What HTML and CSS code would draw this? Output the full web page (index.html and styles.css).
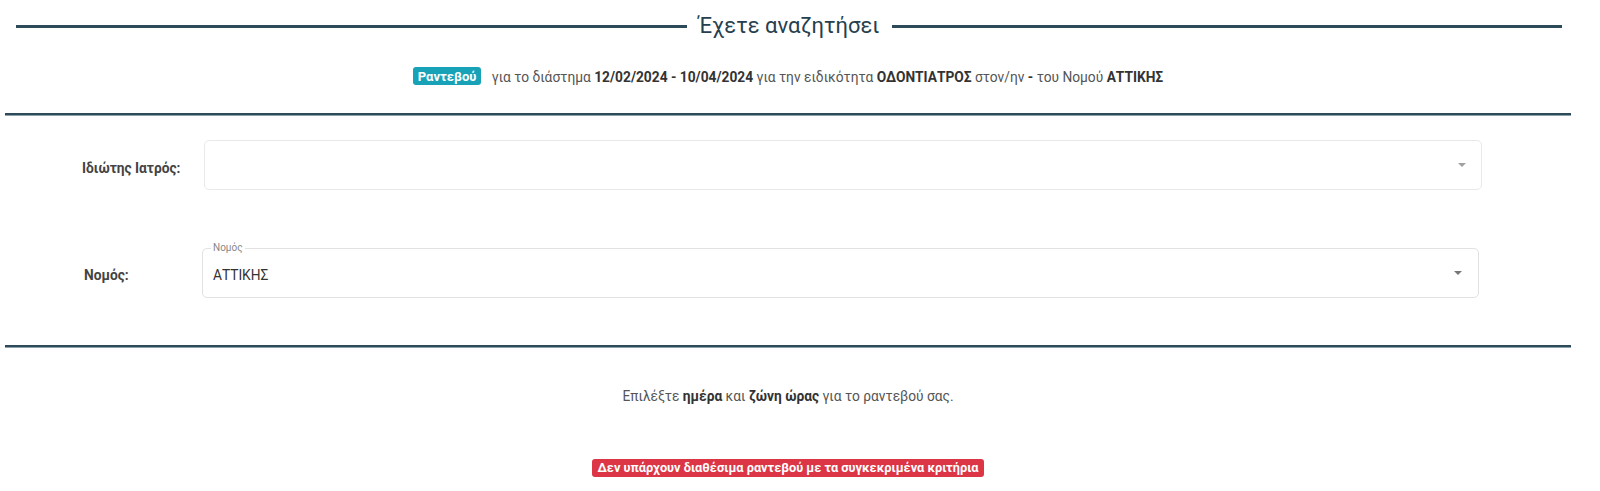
FILE: index.html
```html
<!DOCTYPE html>
<html lang="el">
<head>
  <meta charset="UTF-8" />
  <title>Αναζήτηση ραντεβού</title>
  <link rel="stylesheet" href="styles.css">
</head>
<body>
  <div class="page">
    <div class="title-row">
      <span class="title-line"></span>
      <h2>Έχετε αναζητήσει</h2>
      <span class="title-line"></span>
    </div>

    <p class="summary">
      <span class="badge badge-info">Ραντεβού</span>
      για το διάστημα <b>12/02/2024 - 10/04/2024</b> για την ειδικότητα <b>ΟΔΟΝΤΙΑΤΡΟΣ</b> στον/ην <b>-</b> του Νομού <b>ΑΤΤΙΚΗΣ</b>
    </p>

    <hr class="divider">

    <div class="form-row">
      <label class="form-label">Ιδιώτης Ιατρός:</label>
      <div class="select-box">
        <span class="caret"></span>
      </div>
    </div>

    <div class="form-row form-row-outlined">
      <label class="form-label">Νομός:</label>
      <div class="select-box outlined">
        <span class="float-label">Νομός</span>
        <span class="select-value">ΑΤΤΙΚΗΣ</span>
        <span class="caret dark"></span>
      </div>
    </div>

    <hr class="divider divider-low">

    <p class="hint">Επιλέξτε <b>ημέρα</b> και <b>ζώνη ώρας</b> για το ραντεβού σας.</p>

    <div class="no-results">
      <span class="badge badge-danger">Δεν υπάρχουν διαθέσιμα ραντεβού με τα συγκεκριμένα κριτήρια</span>
    </div>
  </div>
</body>
</html>
```

FILE: styles.css
```css
body {
  margin: 0;
  font-family: Roboto, 'Noto Sans', sans-serif;
  font-size: 13.75px;
  color: #555;
  background: #fff;
}
.page {
  margin: 0 29px 0 5px;
}
b {
  color: #333;
  font-weight: bold;
}

/* heading with lines */
.title-row {
  display: flex;
  align-items: center;
  gap: 12px;
  margin: 12px 9px 0 11px;
}
.title-line {
  flex: 1;
  height: 3px;
  background: #2c4a58;
}
.title-row h2 {
  margin: 0;
  font-size: 22px;
  line-height: 28px;
  font-weight: normal;
  color: #26404e;
}

.summary {
  margin: 27px 0 0;
  line-height: 20px;
  text-align: center;
}
.badge {
  display: inline-block;
  font-size: 13px;
  font-weight: bold;
  line-height: 1;
  padding: 3px 5px 2px;
  border-radius: 3px;
  color: #fff;
  vertical-align: 1px;
}
.badge-info {
  background: #17a2b8;
  margin-right: 7px;
}
.badge-danger {
  background: #dc3545;
  font-size: 12.75px;
}

.divider {
  border: none;
  border-top: 2px solid #2c4a58;
  border-bottom: 1px solid #8da1ab;
  margin: 26px 0 0;
}
.divider-low {
  margin-top: 47px;
}

/* form rows */
.form-row {
  display: grid;
  grid-template-columns: 122px 1fr;
  align-items: center;
  margin: 24px 89px 0 77px;
}
.form-row-outlined {
  margin-top: 58px;
  grid-template-columns: 118px 1fr;
  margin-left: 79px;
  margin-right: 92px;
}
.form-label {
  font-weight: bold;
  color: #444;
  padding-top: 6px;
}
.form-row-outlined .form-label {
  padding-top: 3px;
}
.select-box {
  position: relative;
  height: 48px;
  border: 1px solid #e9e9e9;
  border-radius: 5px;
  display: flex;
  align-items: center;
  padding: 0 11px 0 10px;
}
.select-box.outlined {
  border-color: #e2e2e2;
}
.select-value {
  flex: 1;
  color: #333;
  padding-top: 3px;
}
.float-label {
  position: absolute;
  top: -7px;
  left: 8px;
  padding: 0 2px;
  background: #fff;
  font-size: 10px;
  line-height: 12px;
  color: #888;
}
.caret {
  margin-left: auto;
  margin-right: 4px;
  width: 0;
  height: 0;
  border-left: 4px solid transparent;
  border-right: 4px solid transparent;
  border-top: 4px solid #a0a0a0;
}
.caret.dark {
  border-top-color: #777;
  margin-right: 5px;
}

.hint {
  margin: 38px 0 0;
  line-height: 20px;
  text-align: center;
}
.no-results {
  margin-top: 53px;
  text-align: center;
}
```
